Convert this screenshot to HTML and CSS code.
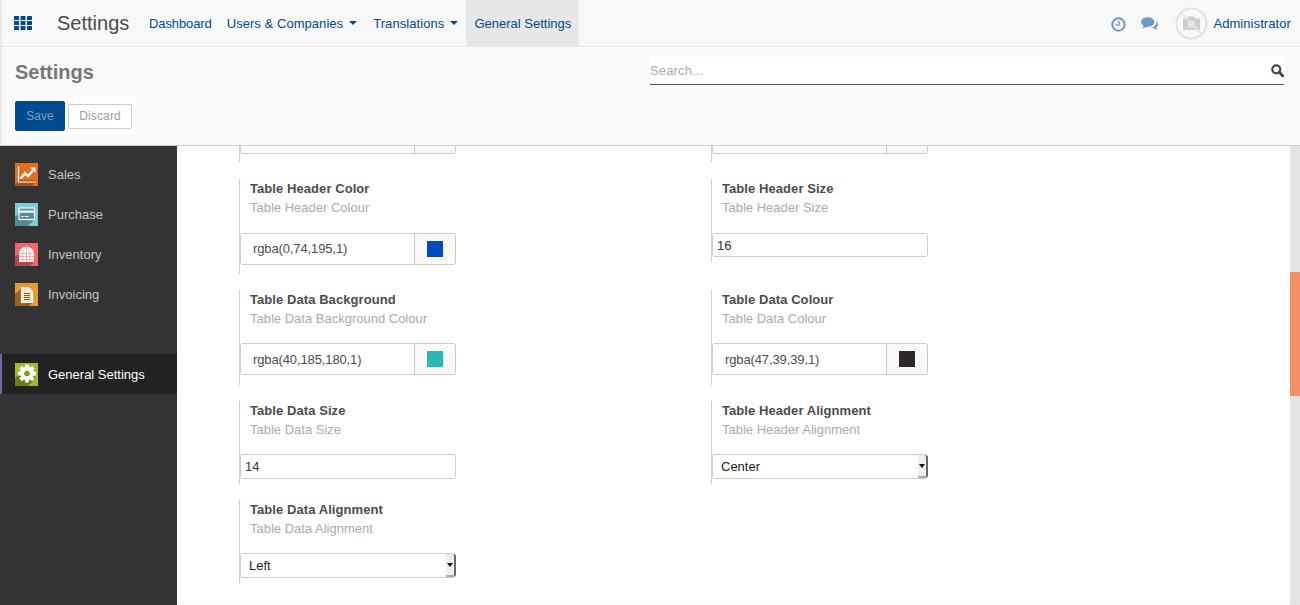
FILE: index.html
```html
<!DOCTYPE html>
<html lang="en">
<head>
<meta charset="utf-8">
<title>Settings</title>
<link rel="stylesheet" href="styles.css">
</head>
<body>
<header class="topbar">
  <div class="apps" aria-label="Apps">
    <svg width="18" height="14" viewBox="0 0 18 14"><g fill="#004a8f"><rect x="0" y="0" width="5" height="4" rx=".5"/><rect x="6.5" y="0" width="5" height="4" rx=".5"/><rect x="13" y="0" width="5" height="4" rx=".5"/><rect x="0" y="5" width="5" height="4" rx=".5"/><rect x="6.5" y="5" width="5" height="4" rx=".5"/><rect x="13" y="5" width="5" height="4" rx=".5"/><rect x="0" y="10" width="5" height="4" rx=".5"/><rect x="6.5" y="10" width="5" height="4" rx=".5"/><rect x="13" y="10" width="5" height="4" rx=".5"/></g></svg>
  </div>
  <div class="brand">Settings</div>
  <nav class="menu">
    <a class="menu-item menu-first">Dashboard</a>
    <a class="menu-item menu-wide">Users &amp; Companies<span class="caret"></span></a>
    <a class="menu-item menu-trans">Translations<span class="caret"></span></a>
    <a class="menu-item active">General Settings</a>
  </nav>
  <div class="systray">
    <svg class="tray-clock" width="15" height="15" viewBox="0 0 15 15"><circle cx="7.5" cy="7.5" r="6.200" fill="#f4f7fa" stroke="#6f9ac6" stroke-width="2"/><path d="M8 3.800V8H4.600" fill="none" stroke="#6f9ac6" stroke-width="1.300"/></svg>
    <svg class="tray-chat" width="17" height="14" viewBox="0 0 17 14"><path d="M15 4.500c1.500.8 2 2 2 3.200 0 1.200-.7 2.200-1.700 2.900.1.800.5 1.500 1 2.100-1.300-.2-2.500-.7-3.300-1.500-1 .1-2.200-.1-3-.6 3.500-.4 6-3 5-6.100z" fill="#6f9ac6"/><ellipse cx="6.700" cy="5" rx="6.700" ry="4.800" fill="#6f9ac6"/><path d="M3 8l-1.500 3.500L7 9.500z" fill="#6f9ac6"/></svg>
    <div class="avatar">
      <svg width="33" height="33" viewBox="0 0 33 33"><circle cx="16.500" cy="16.500" r="15" fill="#f9f9f9" stroke="#e2e2e2" stroke-width="2.200"/><path d="M8 11.500h4l1.500-2h6l1.500 2h4v11.500H8z" fill="#cfcfcf"/><circle cx="16.500" cy="17" r="3.500" fill="#ececec"/><path d="M6.500 5.500l20 22" stroke="#e2e2e2" stroke-width="1.800"/></svg>
    </div>
    <a class="user">Administrator</a>
  </div>
</header>

<section class="control">
  <div class="control-left">
    <h1 class="page-title">Settings</h1>
    <div class="actions">
      <button class="btn btn-save">Save</button>
      <button class="btn btn-discard">Discard</button>
    </div>
  </div>
  <div class="search">
    <span class="search-text">Search...</span>
    <svg width="13" height="13" viewBox="0 0 13 13"><circle cx="5.300" cy="5.300" r="4" fill="none" stroke="#4a4340" stroke-width="2.200"/><path d="M8.300 8.300l3.600 3.600" stroke="#4a4340" stroke-width="2.800" stroke-linecap="round"/></svg>
  </div>
</section>

<div class="main">
  <aside class="sidebar">
    <a class="side-item">
      <svg class="app-icon" viewBox="0 0 23 23"><rect width="23" height="23" fill="#e56d1e"/><path d="M0 21l3-3h20v-1l-6 6H0z" fill="#ab5117"/><path d="M3 17h17v3H3z" fill="#ab5117"/><path d="M3.500 3.500v15.500h17.500" fill="none" stroke="#fff" stroke-width="1.200"/><path d="M5.500 15.500l4.500-5 3 2.500 4.500-5" fill="none" stroke="#fff" stroke-width="2.400"/><path d="M15 4.500h5.500v5.500z" fill="#fff"/></svg>
      <span>Sales</span>
    </a>
    <a class="side-item">
      <svg class="app-icon" viewBox="0 0 23 23"><rect width="23" height="23" fill="#7ccbd8"/><path d="M0 14l4-4V5h15.500v11.500L13 23H0z" fill="#558b96"/><rect x="4" y="5" width="15.500" height="11.500" fill="none" stroke="#fff" stroke-width="1.200"/><rect x="4" y="7.500" width="15.500" height="2.200" fill="#fff"/><rect x="6" y="13" width="3.500" height="1" fill="#fff"/><rect x="10.500" y="13" width="3" height="1" fill="#fff"/></svg>
      <span>Purchase</span>
    </a>
    <a class="side-item">
      <svg class="app-icon" viewBox="0 0 23 23"><rect width="23" height="23" fill="#f4666c"/><path d="M0 13l4-2v8h15l-4 4H0z" fill="#b1484e"/><path d="M4 11C4 7 8 3.500 11.500 3.500S19 7 19 11v8H4z" fill="#fff"/><path d="M4 10.500h15M4 13.500h15M4 16.500h15M8 7v12M11.500 4v15M15 7v12" stroke="#f4666c" stroke-width=".5"/></svg>
      <span>Inventory</span>
    </a>
    <a class="side-item">
      <svg class="app-icon" viewBox="0 0 23 23"><rect width="23" height="23" fill="#ec9a30"/><path d="M0 11l6-5v13.500h11.500L14 23H0z" fill="#9b6323"/><path d="M6.500 4.500h7l4 4v11h-11z" fill="#f6e7cf" stroke="#fff" stroke-width="1.200"/><path d="M13 5v3.500h4" fill="none" stroke="#fff"/><path d="M9 10.500h6M9 12.500h6M9 14.500h6M9 16.500h6" stroke="#8a5a20" stroke-width="1"/></svg>
      <span>Invoicing</span>
    </a>
    <a class="side-item current">
      <svg class="app-icon" viewBox="0 0 23 23"><rect width="23" height="23" fill="#a8b728"/><path d="M3 12l8-7 10 10-8 8H0v-8z" fill="#6f7b1c"/><g fill="#fff"><circle cx="12" cy="10.500" r="6.800"/><rect x="10" y="1.500" width="4" height="18"/><rect x="3" y="8.500" width="18" height="4"/><rect x="10" y="1.500" width="4" height="18" transform="rotate(45 12 10.500)"/><rect x="10" y="1.500" width="4" height="18" transform="rotate(-45 12 10.500)"/></g><circle cx="12" cy="10.500" r="2.800" fill="#8b9822"/></svg>
      <span>General Settings</span>
    </a>
  </aside>

  <main class="content">
    <div class="form">
      <div class="row row-clipped">
        <div class="field field-clipped"><div class="combo"><span class="combo-value"></span><span class="combo-addon"></span></div></div>
        <div class="field field-clipped"><div class="combo"><span class="combo-value"></span><span class="combo-addon"></span></div></div>
      </div>
      <div class="row row-first">
        <div class="field">
          <div class="label">Table Header Color</div>
          <div class="desc">Table Header Colour</div>
          <div class="combo"><span class="combo-value">rgba(0,74,195,1)</span><span class="combo-addon"><i class="swatch swatch-blue"></i></span></div>
        </div>
        <div class="field field-short">
          <div class="label">Table Header Size</div>
          <div class="desc">Table Header Size</div>
          <div class="text-input">16</div>
        </div>
      </div>
      <div class="row">
        <div class="field">
          <div class="label">Table Data Background</div>
          <div class="desc">Table Data Background Colour</div>
          <div class="combo"><span class="combo-value">rgba(40,185,180,1)</span><span class="combo-addon"><i class="swatch swatch-teal"></i></span></div>
        </div>
        <div class="field">
          <div class="label">Table Data Colour</div>
          <div class="desc">Table Data Colour</div>
          <div class="combo"><span class="combo-value">rgba(47,39,39,1)</span><span class="combo-addon"><i class="swatch swatch-dark"></i></span></div>
        </div>
      </div>
      <div class="row row-compact">
        <div class="field">
          <div class="label">Table Data Size</div>
          <div class="desc">Table Data Size</div>
          <div class="text-input">14</div>
        </div>
        <div class="field">
          <div class="label">Table Header Alignment</div>
          <div class="desc">Table Header Alignment</div>
          <div class="select">Center<span class="select-arrow"></span></div>
        </div>
      </div>
      <div class="row row-compact">
        <div class="field">
          <div class="label">Table Data Alignment</div>
          <div class="desc">Table Data Alignment</div>
          <div class="select">Left<span class="select-arrow"></span></div>
        </div>
      </div>
    </div>
    <div class="scrollbar"><div class="scroll-thumb"></div></div>
  </main>
</div>
</body>
</html>
```
FILE: styles.css
```css
* { box-sizing: border-box; }
html, body { margin: 0; height: 100%; overflow: hidden; }
body {
  font-family: "Liberation Sans", Arial, sans-serif;
  font-size: 13px;
  color: #4c4c4c;
  background: #fff;
  display: flex;
  flex-direction: column;
  height: 605px;
}
.topbar {
  height: 47px;
  flex: none;
  display: flex;
  align-items: center;
  background: #f8f8f8;
  border-bottom: 1px solid #e7e7e7;
  box-shadow: inset 4px 0 3px -3px #ddd;
}
.apps { margin-left: 14px; width: 43px; display: flex; }
.brand { font-size: 20px; color: #4c4c4c; width: 84px; padding-top: 1px; }
.menu { display: flex; height: 46px; }
.menu-item {
  display: flex;
  align-items: center;
  padding: 0 8px;
  color: #004a8f;
  white-space: nowrap;
}
.menu-first { padding-right: 7px; letter-spacing: -.1px; }
.menu-wide { padding-right: 8px; letter-spacing: .05px; }
.menu-trans { padding-right: 8px; letter-spacing: .08px; }
.menu-item.active { background: #e7e7e7; }
.caret {
  display: inline-block;
  margin-left: 6px;
  border-left: 4px solid transparent;
  border-right: 4px solid transparent;
  border-top: 4px solid #004a8f;
}
.systray { margin-left: auto; display: flex; align-items: center; padding-right: 9px; }
.tray-clock { margin: 2px 15px 0 0; }
.tray-chat { margin: 2px 17px 0 0; }
.avatar { width: 33px; height: 33px; margin-right: 5px; }
.user { color: #004a8f; letter-spacing: .08px; }

.control {
  height: 99px;
  flex: none;
  display: flex;
  justify-content: space-between;
  align-items: flex-start;
  background: #f9f9f9;
  border-bottom: 1px solid #ccc;
  padding: 10px 16px 0 15px;
  box-shadow: inset 4px 0 3px -3px #ddd;
}
.page-title { margin: 0; font-size: 20px; line-height: 30px; font-weight: bold; color: #777; }
.actions {
  margin-top: 10px;
  width: 120px;
  height: 38px;
  background: #fff;
  display: flex;
  align-items: center;
  gap: 3px;
}
.btn { font: 12px "Liberation Sans", Arial, sans-serif; border-radius: 2px; padding: 0; }
.btn-save { width: 50px; height: 30px; background: #004a8f; border: 1px solid #004a8f; color: #7f9dbc; }
.btn-discard { width: 64px; height: 25px; background: #fff; border: 1px solid #ccc; color: #a99e9e; letter-spacing: .15px; }
.search {
  width: 634px;
  height: 28px;
  background: #fff;
  border-bottom: 1px solid #555;
  display: flex;
  align-items: center;
  justify-content: space-between;
}
.search-text { font-size: 13px; color: #aaa; letter-spacing: .15px; }

.main { flex: 1; display: flex; min-height: 0; }
.sidebar {
  width: 177px;
  flex: none;
  background: #333;
  padding-top: 8px;
}
.side-item {
  height: 40px;
  display: flex;
  align-items: center;
  padding-left: 15px;
  color: #c3c3c3;
}
.side-item span { margin-left: 10px; }
.app-icon { width: 23px; height: 23px; flex: none; }
.side-item.current {
  margin-top: 40px;
  background: #222;
  color: #fff;
  border-left: 2px solid #6f6a9f;
  padding-left: 13px;
}

.content { flex: 1; display: flex; background: #f9f9f9; min-width: 0; }
.form {
  flex: 1;
  background: #fff;
  height: 455px;
  overflow: hidden;
  padding-left: 62px;
  display: flex;
  flex-direction: column;
  gap: 16px;
}
.row { display: grid; grid-template-columns: 472px 217px; flex: none; }
.row-clipped { height: 16px; overflow: hidden; margin-bottom: 1px; }
.field {
  border-left: 1px solid #ccc;
  width: 217px;
  height: 95px;
  padding-top: 2px;
}
.field-clipped { height: 16px; padding-top: 0; display: flex; align-items: flex-end; padding-bottom: 8px; }
.field-clipped .combo { margin: 0; }
.field-short { height: 83px; }
.row-compact .field { height: 83px; }
.label { margin-left: 10px; font-weight: bold; line-height: 15px; color: #4c4c4c; letter-spacing: .07px; }
.desc { margin: 4px 0 0 10px; line-height: 15px; color: #aaa; }
.combo {
  margin-top: 17px;
  width: 216px;
  height: 32px;
  flex: none;
  display: flex;
  border: 1px solid #ccc;
  border-radius: 3px;
  color: #4c4c4c;
}
.row-first .combo { margin-top: 18px; }
.row-first .combo-value { padding-bottom: 1px; }
.combo-value { flex: 1; display: flex; align-items: center; padding-left: 12px; letter-spacing: -.12px; }
.combo-addon {
  width: 41px;
  background: #f8f8f8;
  border-left: 1px solid #ccc;
  border-radius: 0 3px 3px 0;
  display: flex;
  align-items: center;
  justify-content: center;
}
.swatch { width: 16px; height: 16px; display: block; }
.swatch-blue { background: #004ac3; }
.swatch-teal { background: #28b9b4; }
.swatch-dark { background: #2f2727; }
.text-input {
  margin-top: 17px;
  width: 216px;
  height: 25px;
  border: 1px solid #ccc;
  border-radius: 3px;
  display: flex;
  align-items: center;
  padding-left: 4px;
  color: #333;
}
.row-first .text-input { margin-top: 18px; height: 24px; }
.select {
  position: relative;
  margin-top: 17px;
  width: 216px;
  height: 25px;
  border: 1px solid #ccc;
  border-radius: 3px;
  display: flex;
  align-items: center;
  padding-left: 8px;
  color: #222;
}
.select-arrow {
  position: absolute;
  right: -1px;
  top: 0;
  width: 10px;
  height: 23px;
  background: #eee;
  border-right: 2px solid #666;
  border-bottom: 2px solid #aaa;
  border-radius: 0 3px 3px 0;
}
.select-arrow::after {
  content: "";
  position: absolute;
  left: 1px;
  top: 9px;
  border-left: 3px solid transparent;
  border-right: 3px solid transparent;
  border-top: 4px solid #111;
}
.scrollbar { width: 10px; flex: none; background: #e3e3e3; padding-top: 126px; }
.scroll-thumb { height: 124px; background: #f39068; }
```
